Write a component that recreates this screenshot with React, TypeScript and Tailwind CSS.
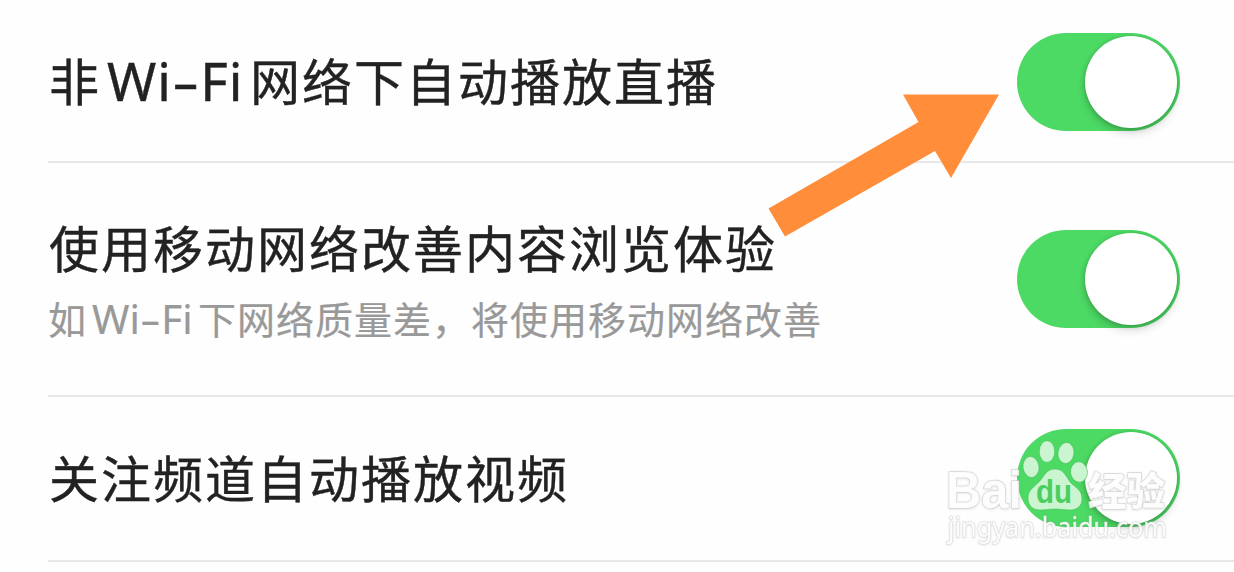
import type { ReactNode } from 'react';

function Toggle() {
  return (
    <button
      role="switch"
      aria-checked="true"
      className="flex h-[98px] w-[163px] shrink-0 items-center justify-end rounded-full bg-[#4cd964] pr-[3px]"
    >
      <span className="size-[92px] rounded-full bg-white shadow-[0_6px_8px_rgba(0,0,0,0.12),0_1px_5px_rgba(0,0,0,0.24)]" />
    </button>
  );
}

function Row({ children, className }: { children: ReactNode; className: string }) {
  return (
    <div className={`ml-12 flex justify-between border-b-2 border-[#e8e8e8] pr-[54px] ${className}`}>
      {children}
      <Toggle />
    </div>
  );
}

function Arrow() {
  return (
    <svg className="absolute top-[90px] left-[760px]" width="244" height="150" viewBox="760 90 244 150">
      <path d="M999 94.5 L951 178 L935 151 L785 236.500 L768.500 208.500 L918.500 122 L903 94.500 Z" fill="#ff8d3a" />
    </svg>
  );
}

function Watermark() {
  return (
    <svg className="absolute top-[430px] left-[936px]" width="250" height="125" viewBox="936 430 250 125">
      <defs>
        <filter id="edge" x="-10%" y="-10%" width="120%" height="130%">
          <feDropShadow dx="0" dy="0.5" stdDeviation="0.8" floodColor="#000" floodOpacity="0.16" />
        </filter>
      </defs>
      <g filter="url(#edge)" fill="#fff" stroke="#c8c8c8" strokeOpacity="0.7" strokeWidth="1.4" paintOrder="stroke">
        <text x="946" y="508" fontFamily="Liberation Sans, sans-serif" fontWeight="700" fontSize="52" textLength="76" lengthAdjust="spacingAndGlyphs" fillOpacity="0.9">Bai</text>
        <text x="1088" y="505" fontFamily="Noto Sans CJK SC, sans-serif" fontWeight="900" fontSize="39" textLength="77" lengthAdjust="spacingAndGlyphs" fillOpacity="0.9">经验</text>
        <text x="948" y="537" fontFamily="Noto Sans, sans-serif" fontSize="27" textLength="219" lengthAdjust="spacingAndGlyphs" fillOpacity="0.9" strokeWidth="1">jingyan.baidu.com</text>
      </g>
      <g fill="#cbf4d0" stroke="#43bd58" strokeOpacity="0.55" strokeWidth="1">
        <ellipse cx="1031" cy="467" rx="8" ry="10.500" transform="rotate(-8 1031 467)" />
        <ellipse cx="1047" cy="451.500" rx="7.700" ry="10.800" />
        <ellipse cx="1066" cy="453" rx="8" ry="10.500" transform="rotate(8 1066 453)" />
        <ellipse cx="1079" cy="472" rx="8.500" ry="10.300" transform="rotate(-6 1079 472)" />
        <path d="M1055 469 C1064 469 1066 477 1071 483 C1076 488 1082 490 1082 499 C1082 506 1077 510 1070 510 C1064 510 1061 509 1055 509 C1049 509 1046 510 1040 510 C1032 510 1028 505 1028 498 C1028 490 1034 487 1039 482 C1044 477 1046 469 1055 469 Z" />
      </g>
      <text x="1036" y="503" fontFamily="Liberation Sans, sans-serif" fontWeight="700" fontSize="33" textLength="36" lengthAdjust="spacingAndGlyphs" fill="#4bce60">du</text>
    </svg>
  );
}

function WiFi({ className }: { className: string }) {
  return (
    <span className={`inline-block font-['Noto_Sans',sans-serif] text-[1.06em] leading-none ${className}`}>
      Wi<span className="inline-block origin-center scale-x-[1.6] px-[0.1em]">-</span>Fi
    </span>
  );
}

const title = "whitespace-nowrap font-['Noto_Sans_CJK_SC',sans-serif] text-[50px] leading-[60px] tracking-[2px] text-[#222] [-webkit-text-stroke:0.4px_#222]";

export default function App() {
  return (
    <main className="relative h-[572px] w-[1234px] overflow-hidden bg-[#fefefe]">
      <Row className="h-[163px] pt-[33px]">
        <h2 className={`${title} pt-[16px] pl-px`}>
          非<WiFi className="w-[149px] pl-[6px] tracking-[0.9px]" />网络下自动播放直播
        </h2>
      </Row>
      <Row className="h-[234px] pt-[67px]">
        <div>
          <h2 className={`${title} -mt-[14px] pl-px`}>使用移动网络改善内容浏览体验</h2>
          <p className="mt-[18px] font-['Noto_Sans_CJK_SC',sans-serif] text-[38px] leading-[48px] tracking-[1px] whitespace-nowrap text-[#999] [-webkit-text-stroke:0.2px_#999]">
            如<WiFi className="w-[111px] pl-[5px] tracking-[0.1px]" />下网络质量差，将使用移动网络改善
          </p>
        </div>
      </Row>
      <Row className="h-[165px] pt-[32px]">
        <h2 className={`${title} pt-[17px] pl-px`}>关注频道自动播放视频</h2>
      </Row>
      <Arrow />
      <Watermark />
    </main>
  );
}
